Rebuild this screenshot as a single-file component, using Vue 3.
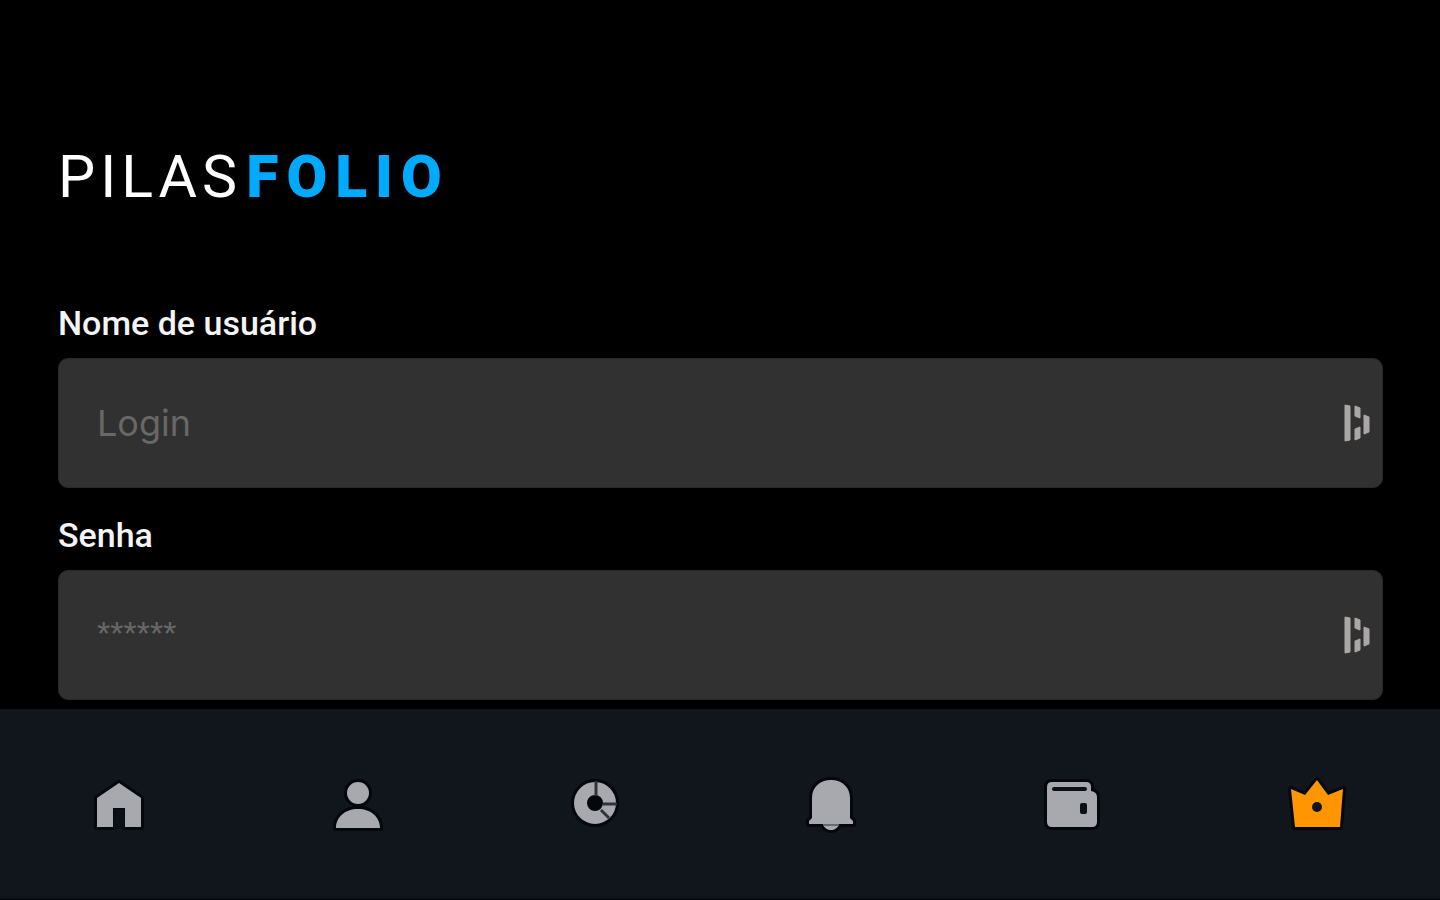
<script setup>
import { ref } from 'vue'

const username = ref('')
const password = ref('')
</script>

<template>
  <div class="screen">
    <main class="content">
      <h1 class="logo"><span class="logo-light">PILAS</span><span class="logo-bold">FOLIO</span></h1>
      <form class="form" @submit.prevent>
        <div class="group">
          <label for="username">Nome de usuário</label>
          <div class="field">
            <input id="username" v-model="username" type="text" placeholder="Login" autocomplete="off" />
            <svg class="manager" viewBox="0 0 30 40" aria-hidden="true">
              <path d="M4 2l5 1v34l-5 1zM14 3l5 2v10l-5 -2zM14 26l5 -2v11l-5 2zM23 12l5 2v15l-5 2z" />
            </svg>
          </div>
        </div>
        <div class="group">
          <label for="password">Senha</label>
          <div class="field">
            <input id="password" v-model="password" type="password" placeholder="******" autocomplete="off" />
            <svg class="manager" viewBox="0 0 30 40" aria-hidden="true">
              <path d="M4 2l5 1v34l-5 1zM14 3l5 2v10l-5 -2zM14 26l5 -2v11l-5 2zM23 12l5 2v15l-5 2z" />
            </svg>
          </div>
        </div>
      </form>
    </main>

    <nav class="tabs" aria-label="Principal">
      <a href="#inicio" aria-label="Início">
        <svg width="46" height="52" viewBox="0 0 46 52">
          <path class="shape" d="M23 5L45 20V49H29V30H17V49H1V20Z" />
          <path d="M18 31H28V51H18Z" fill="#0b1016" />
        </svg>
      </a>
      <a href="#perfil" aria-label="Perfil">
        <svg width="48" height="52" viewBox="0 0 48 52">
          <path class="shape" d="M24 4a11 11 0 1 1 0 22a11 11 0 0 1 0-22zM2 50C2 39 11 31 24 31S46 39 46 50Z" />
        </svg>
      </a>
      <a href="#carteira" aria-label="Distribuição">
        <svg width="44" height="52" viewBox="0 0 44 52">
          <circle cx="22" cy="25" r="24" fill="#04070c" />
          <circle class="ring" cx="22" cy="25" r="14.5" />
          <path class="cut" d="M23 3V18M30 26H44M28 32L36 40" />
        </svg>
      </a>
      <a href="#alertas" aria-label="Alertas">
        <svg width="46" height="52" viewBox="1 0 46 52">
          <path class="shape" d="M4 40V20C4 9 12 2 23 2S42 9 42 20V40L45 43V46H31C29 54 17 54 15 46H1V43Z" />
          <path d="M15 46H31L30 48H16Z" fill="#686a70" />
        </svg>
      </a>
      <a href="#conta" aria-label="Conta">
        <svg width="52" height="52" viewBox="0 0 52 52">
          <path class="shape" d="M6 4H40Q45 4 45 9V13Q51 14 51 19V44Q51 49 46 49H6Q1 49 1 44V9Q1 4 6 4Z" />
          <path class="slot" d="M8 11H39" />
          <rect x="34" y="25" width="7" height="11" rx="2" fill="#0b1016" />
        </svg>
      </a>
      <a href="#premium" aria-label="Premium">
        <svg width="54" height="52" viewBox="0 0 54 52">
          <path class="shape crown" d="M27 2L38 17L53 11L50 49H5L1 11L15 17Z" />
          <circle cx="27" cy="29" r="5" fill="#10151c" />
        </svg>
      </a>
    </nav>
  </div>
</template>

<style>
body {
  background: #000;
}
</style>

<style scoped>
.screen {
  display: flex;
  flex-direction: column;
  height: 100vh;
  overflow: hidden;
  background: #000;
  font-family: Roboto, "Open Sans", sans-serif;
}

.content {
  flex: 1;
  min-height: 0;
  overflow: hidden;
  padding: 136px 57px 0 58px;
}

.logo {
  display: flex;
  gap: 4px;
  margin: 0 0 82px;
  font-size: 59px;
  line-height: 82px;
}

.logo-light {
  color: #fff;
  font-weight: 400;
  letter-spacing: 5px;
}

.logo-bold {
  color: #00aaff;
  font-weight: 900;
  letter-spacing: 8px;
}

.form {
  display: flex;
  flex-direction: column;
  gap: 24px;
}

.group {
  display: flex;
  flex-direction: column;
  gap: 12px;
}

label {
  color: #f4f4f4;
  font-size: 34px;
  font-weight: 500;
  line-height: 46px;
}

.field {
  position: relative;
}

input {
  display: block;
  box-sizing: border-box;
  width: 100%;
  height: 130px;
  padding: 0 80px 0 38px;
  border: 1px solid #292929;
  border-radius: 10px;
  outline: none;
  background: #313131;
  color: #fff;
  font-family: Inter, sans-serif;
  font-size: 36px;
  font-weight: 400;
}

input[type="password"] {
  padding-bottom: 4px;
  font-family: "Liberation Sans", Arial, sans-serif;
  font-size: 34px;
}

input::placeholder {
  color: #686868;
  opacity: 1;
}

.manager {
  position: absolute;
  top: 45px;
  right: 12px;
  width: 30px;
  height: 40px;
  fill: #aaa8a6;
  stroke: #aaa8a6;
  stroke-width: 1;
  stroke-linejoin: round;
}

.tabs {
  display: flex;
  justify-content: space-between;
  padding: 69px 96px 68px;
  border-bottom: 2px solid #070b12;
  background: #11161d;
}

.tabs a,
.tabs svg {
  display: block;
}

.tabs svg {
  overflow: visible;
}

.shape {
  fill: #a7a9af;
  stroke: #04070c;
  stroke-width: 6;
  stroke-linejoin: round;
  paint-order: stroke;
}

.crown {
  fill: #ff9500;
}

.ring {
  fill: none;
  stroke: #a7a9af;
  stroke-width: 13;
}

.cut {
  fill: none;
  stroke: #30343a;
  stroke-width: 3;
}

.slot {
  stroke: #0b1016;
  stroke-width: 4;
  stroke-linecap: round;
}
</style>
